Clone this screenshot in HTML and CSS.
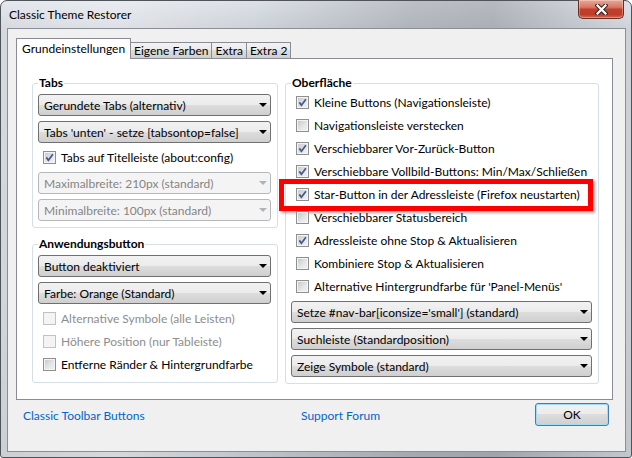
FILE: index.html
```html
<!DOCTYPE html>
<html lang="de">
<head>
    <meta charset="UTF-8">
    <title>Classic Theme Restorer</title>
    <link rel="stylesheet" href="styles.css">
</head>
<body>
    <div class="window">
        <div class="titlebar">
            <span class="title">Classic Theme Restorer</span>
            <button type="button" class="close" title="Schließen">
                <svg width="13" height="11" viewBox="0 0 13 11">
                    <path d="M2.5 1.5 10.5 9.5 M10.5 1.5 2.5 9.5" stroke="#3a2220" stroke-width="4.2" stroke-linecap="square"/>
                    <path d="M2.5 1.5 10.5 9.5 M10.5 1.5 2.5 9.5" stroke="#fff" stroke-width="2.2" stroke-linecap="square"/>
                </svg>
            </button>
        </div>

        <div class="client">
            <div class="tabs">
                <div class="tab selected">Grundeinstellungen</div>
                <div class="tab">Eigene Farben</div>
                <div class="tab">Extra</div>
                <div class="tab">Extra 2</div>
            </div>

            <div class="panel">
                <div class="column">
                    <fieldset class="group">
                        <legend>Tabs</legend>
                        <div class="combo"><span>Gerundete Tabs (alternativ)</span><i class="arrow"></i></div>
                        <div class="combo"><span>Tabs 'unten' - setze [tabsontop=false]</span><i class="arrow"></i></div>
                        <label class="check"><span class="box"><svg width="11" height="11" viewBox="0 0 11 11"><path d="M2.3 5.4 4.4 8.2 8.9 2.2"/></svg></span>Tabs auf Titelleiste (about:config)</label>
                        <div class="combo disabled"><span>Maximalbreite: 210px (standard)</span><i class="arrow"></i></div>
                        <div class="combo disabled"><span>Minimalbreite: 100px (standard)</span><i class="arrow"></i></div>
                    </fieldset>

                    <fieldset class="group">
                        <legend>Anwendungsbutton</legend>
                        <div class="combo"><span>Button deaktiviert</span><i class="arrow"></i></div>
                        <div class="combo"><span>Farbe: Orange (Standard)</span><i class="arrow"></i></div>
                        <label class="check disabled"><span class="box"></span>Alternative Symbole (alle Leisten)</label>
                        <label class="check disabled"><span class="box"></span>Höhere Position (nur Tableiste)</label>
                        <label class="check"><span class="box"></span>Entferne Ränder &amp; Hintergrundfarbe</label>
                    </fieldset>
                </div>

                <fieldset class="group wide">
                    <legend>Oberfläche</legend>
                    <label class="check"><span class="box"><svg width="11" height="11" viewBox="0 0 11 11"><path d="M2.3 5.4 4.4 8.2 8.9 2.2"/></svg></span>Kleine Buttons (Navigationsleiste)</label>
                    <label class="check"><span class="box"></span>Navigationsleiste verstecken</label>
                    <label class="check"><span class="box"><svg width="11" height="11" viewBox="0 0 11 11"><path d="M2.3 5.4 4.4 8.2 8.9 2.2"/></svg></span>Verschiebbarer Vor-Zurück-Button</label>
                    <label class="check"><span class="box"><svg width="11" height="11" viewBox="0 0 11 11"><path d="M2.3 5.4 4.4 8.2 8.9 2.2"/></svg></span>Verschiebbare Vollbild-Buttons: Min/Max/Schließen</label>
                    <label class="check marked"><span class="box"><svg width="11" height="11" viewBox="0 0 11 11"><path d="M2.3 5.4 4.4 8.2 8.9 2.2"/></svg></span>Star-Button in der Adressleiste (Firefox neustarten)</label>
                    <label class="check"><span class="box"></span>Verschiebbarer Statusbereich</label>
                    <label class="check"><span class="box"><svg width="11" height="11" viewBox="0 0 11 11"><path d="M2.3 5.4 4.4 8.2 8.9 2.2"/></svg></span>Adressleiste ohne Stop &amp; Aktualisieren</label>
                    <label class="check"><span class="box"></span>Kombiniere Stop &amp; Aktualisieren</label>
                    <label class="check"><span class="box"></span>Alternative Hintergrundfarbe für 'Panel-Menüs'</label>
                    <div class="combo"><span>Setze #nav-bar[iconsize='small'] (standard)</span><i class="arrow"></i></div>
                    <div class="combo"><span>Suchleiste (Standardposition)</span><i class="arrow"></i></div>
                    <div class="combo"><span>Zeige Symbole (standard)</span><i class="arrow"></i></div>
                </fieldset>
            </div>

            <div class="footer">
                <a href="#" class="link">Classic Toolbar Buttons</a>
                <a href="#" class="link">Support Forum</a>
                <button type="button" class="ok">OK</button>
            </div>
        </div>
    </div>
</body>
</html>
```

FILE: styles.css
```css
* {
    box-sizing: border-box;
}
body {
    margin: 0;
    background: #fff;
    font-family: Lato, "Liberation Sans", sans-serif;
    font-size: 12px;
    color: #000;
}

/* window frame */
.window {
    width: 632px;
    height: 458px;
    display: flex;
    flex-direction: column;
    border: 1px solid #4f545b;
    border-radius: 7px 7px 3px 3px;
    background:
        linear-gradient(90deg, rgba(255,255,255,0.2) 0%, rgba(255,255,255,0.35) 18%, rgba(0,0,0,0) 40%, rgba(60,62,70,0.2) 65%, rgba(60,62,70,0.24) 78%, rgba(255,255,255,0.05) 100%),
        linear-gradient(#dde1e7, #cbd0d7 30px, #c7ccd3 60%, #bfc4cb);
}
.titlebar {
    height: 27px;
    display: flex;
    justify-content: space-between;
    padding: 0 7px 0 8px;
}
.title {
    align-self: center;
    font-size: 12px;
    color: #000;
}
.close {
    width: 46px;
    height: 19px;
    margin-top: -1px;
    padding: 0;
    display: flex;
    align-items: center;
    justify-content: center;
    border: 1px solid #6a2b22;
    border-top: none;
    border-radius: 0 0 5px 5px;
    background: linear-gradient(#e9a797, #d67866 40%, #c23f2a 52%, #bd3b28 80%, #d06a52);
    box-shadow: inset 0 0 0 1px rgba(255,255,255,0.3);
}
.close svg {
    display: block;
}

.client {
    flex: 1;
    margin: 0 5px 5px 6px;
    border: 1px solid #8a8f96;
    background: #f0f0f0;
    padding: 9px 12px 0 8px;
}

/* tab strip */
.tabs {
    display: flex;
    align-items: flex-end;
    height: 20px;
}
.tab {
    height: 16px;
    padding: 0 3px;
    line-height: 15px;
    border: 1px solid #898c95;
    border-bottom: none;
    background: linear-gradient(#f2f2f2, #ebebeb 50%, #dddddd 50%, #cfcfcf);
}
.tab + .tab {
    margin-left: -1px;
}
.tab.selected {
    position: relative;
    z-index: 1;
    height: 21px;
    margin-bottom: -1px;
    padding: 2px 5px 0;
    background: #fff;
}

.panel {
    display: grid;
    grid-template-columns: 246px 314px;
    gap: 7px;
    border: 1px solid #898c95;
    background: #fff;
    padding: 16px 13px 15px 15px;
}
.column {
    display: flex;
    flex-direction: column;
    gap: 8px;
}

/* group boxes */
.group {
    margin: 0;
    min-width: 0;
    border: 1px solid #d5dfe5;
    border-radius: 3px;
    padding: 3px 6px 6px 5px;
}
.group.wide {
    padding-top: 0;
}
.group legend {
    padding: 0 1px;
    line-height: 16px;
    font-weight: bold;
}

/* drop-down boxes */
.combo {
    display: flex;
    align-items: center;
    justify-content: space-between;
    height: 22px;
    padding: 0 3px 0 5px;
    border: 1px solid #707070;
    border-radius: 3px;
    background: linear-gradient(#f2f2f2, #ebebeb 50%, #dddddd 50%, #cfcfcf);
    white-space: nowrap;
}
.combo + .combo {
    margin-top: 5px;
}
.check + .combo,
.combo + .check {
    margin-top: 3px;
}
.arrow {
    width: 0;
    height: 0;
    border-left: 4px solid transparent;
    border-right: 4px solid transparent;
    border-top: 4px solid #000;
}
.combo.disabled {
    border-color: #b5b8bb;
    background: #f4f4f4;
    color: #848484;
}
.combo.disabled .arrow {
    border-top-color: #b0b3b6;
}

/* check boxes */
.check {
    position: relative;
    display: flex;
    align-items: center;
    gap: 5px;
    height: 23px;
    padding-left: 5px;
    white-space: nowrap;
}
.box {
    width: 13px;
    height: 13px;
    flex: none;
    border: 1px solid #8e8f8f;
    background: linear-gradient(135deg, #c3c6ca, #e6e7e8 60%, #f3f3f3);
    box-shadow: inset 0 0 0 1px #f4f4f4;
}
.box svg {
    display: block;
}
.box path {
    fill: none;
    stroke: #4a5c8d;
    stroke-width: 1.8;
}
.check.disabled {
    color: #8d8d8d;
}
.check.disabled .box {
    border-color: #c2c2c2;
    background: #f4f4f4;
    box-shadow: none;
}

/* red frame drawn round the highlighted option */
.check.marked::after {
    content: "";
    position: absolute;
    top: -4px;
    right: -1px;
    bottom: -5px;
    left: -12px;
    border: 5px solid #f00;
    box-shadow: 2px 2px 3px rgba(0,0,0,0.35);
}

/* bottom row */
.footer {
    display: grid;
    grid-template-columns: 278px 1fr 74px;
    align-items: center;
    padding: 3px 4px 0 7px;
}
.link {
    color: #0066cc;
    text-decoration: none;
    padding-top: 2px;
}
.link:nth-child(2) {
    justify-self: start;
}
.ok {
    height: 23px;
    padding: 0;
    font-family: inherit;
    font-size: 12px;
    color: #000;
    border: 1px solid #3c7fb1;
    border-radius: 3px;
    background: linear-gradient(#f2f2f2, #ebebeb 50%, #dddddd 50%, #cfcfcf);
    box-shadow: inset 0 0 0 1px #9fdcf7;
}
```
